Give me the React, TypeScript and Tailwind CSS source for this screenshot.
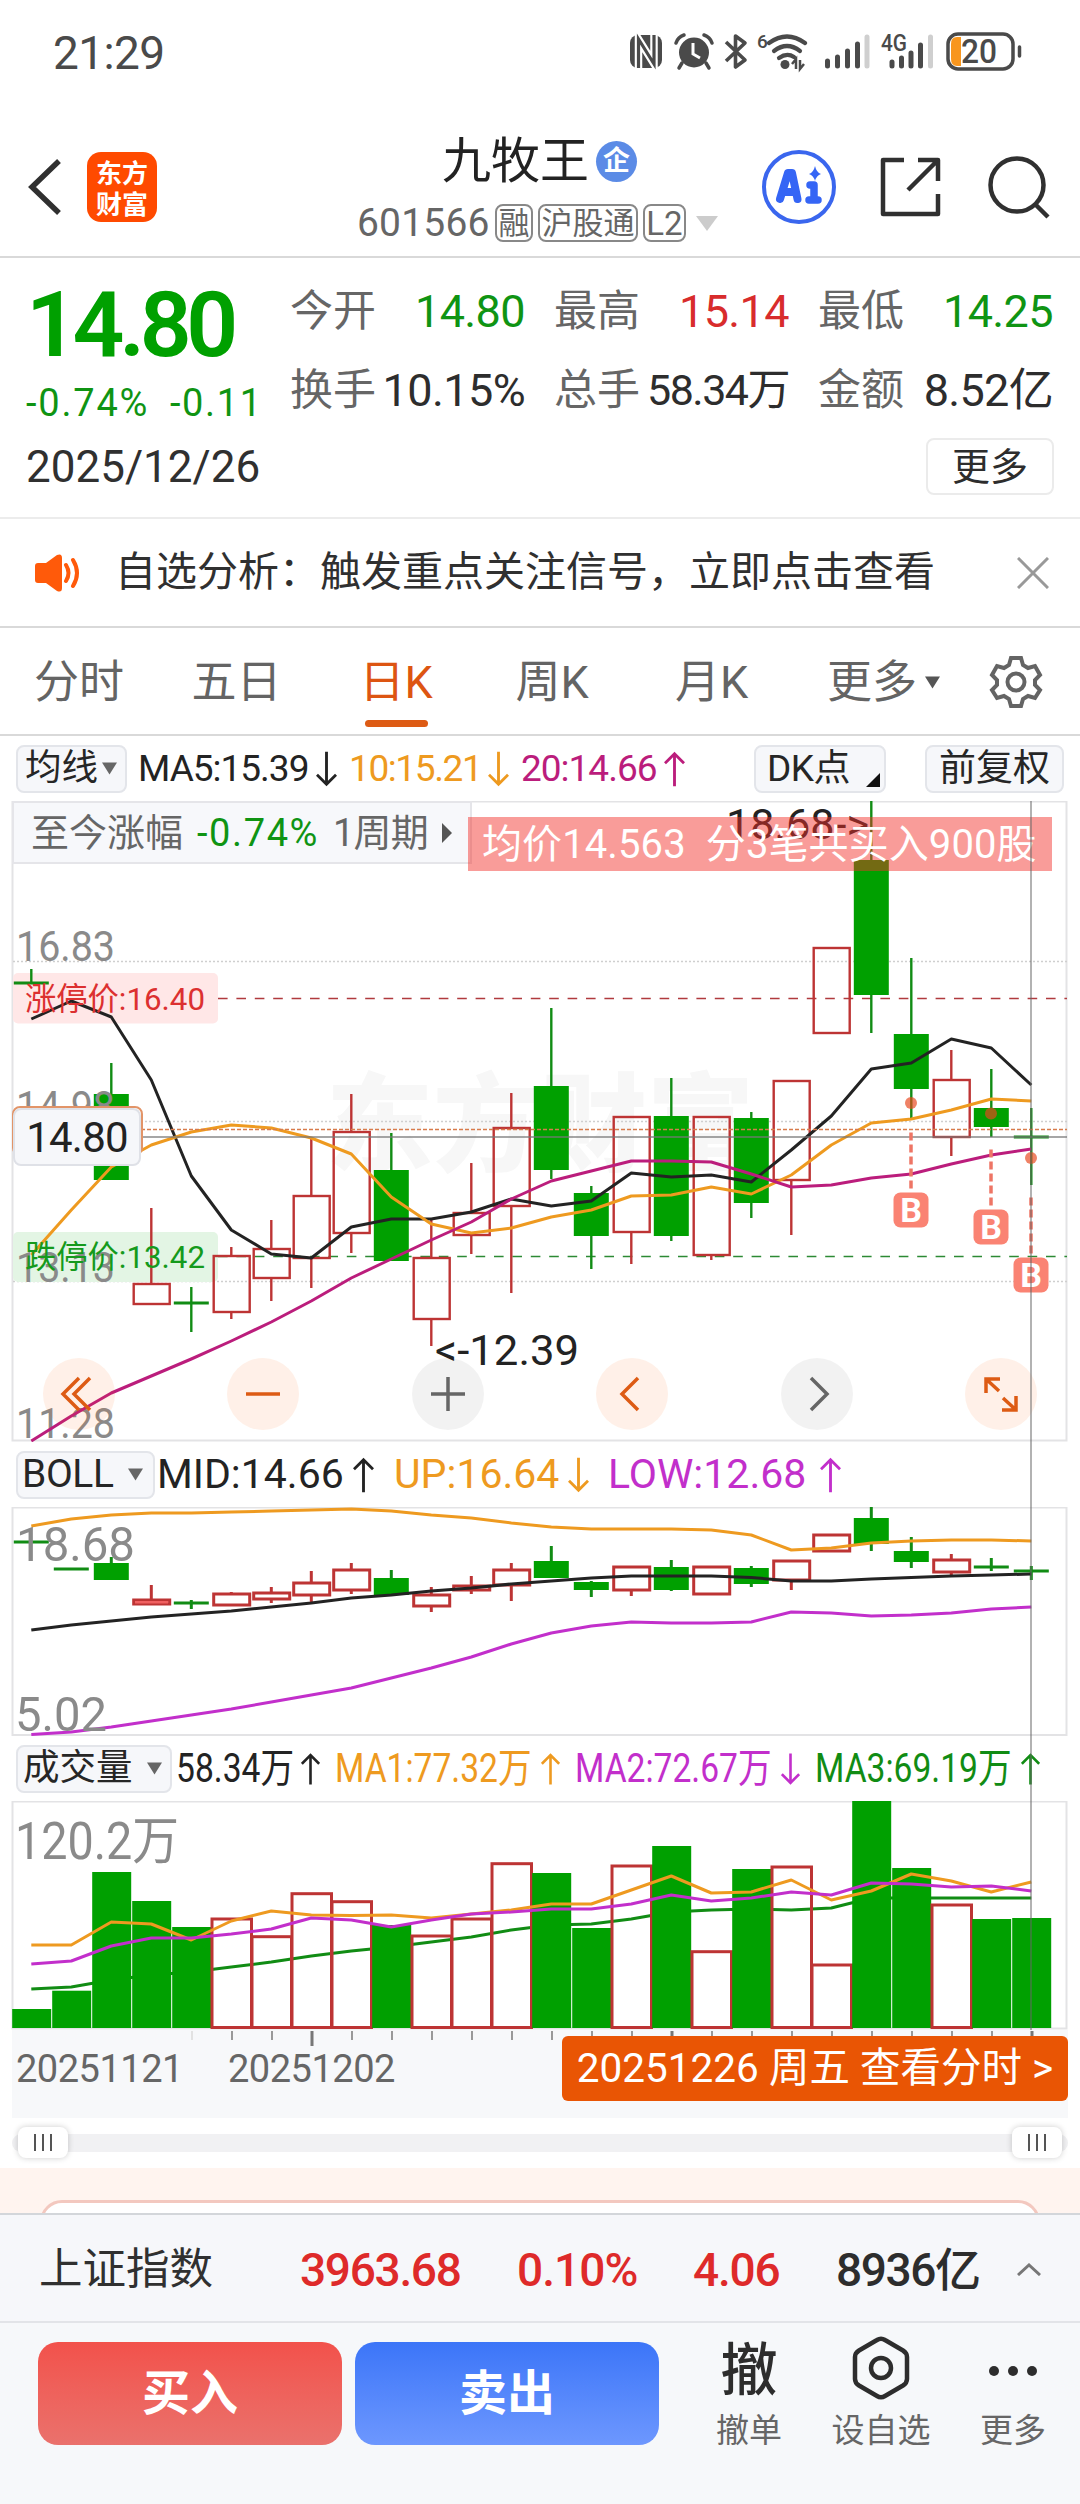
import React from "react";

type Kind = "r" | "g";
// kind, high, body top, body bottom, low
type Candle = [Kind, number, number, number, number];

const GREEN = "#00a000";
const GREEN_LINE = "#118c14";
const RED = "#bd3434";
const ORANGE = "#ee9a20";
const PURPLE = "#c22fcb";
const MAGENTA = "#bb1d7c";
const INK = "#232323";

const cx = (i: number) => 31.3 + i * 40;

const dayCandles: Candle[] = [
  ["g", 969, 982, 984, 984],
  ["g", 1125, 1124, 1126, 1125],
  ["g", 1063, 1094, 1180, 1180],
  ["r", 1208, 1284, 1304, 1304],
  ["g", 1287, 1302, 1304, 1332],
  ["r", 1247, 1256, 1312, 1319],
  ["r", 1220, 1249, 1278, 1301],
  ["r", 1139, 1196, 1258, 1288],
  ["r", 1094, 1132, 1233, 1253],
  ["g", 1133, 1170, 1261, 1261],
  ["r", 1220, 1258, 1319, 1346],
  ["r", 1163, 1213, 1235, 1254],
  ["r", 1093, 1128, 1206, 1293],
  ["g", 1008, 1086, 1170, 1179],
  ["g", 1186, 1193, 1236, 1269],
  ["r", 1117, 1117, 1232, 1264],
  ["g", 1078, 1116, 1236, 1241],
  ["r", 1117, 1117, 1255, 1260],
  ["g", 1112, 1118, 1203, 1218],
  ["r", 1081, 1081, 1180, 1235],
  ["r", 948, 948, 1033, 1033],
  ["g", 801, 860, 995, 1033],
  ["g", 958, 1034, 1089, 1118],
  ["r", 1050, 1080, 1137, 1156],
  ["g", 1069, 1108, 1127, 1137],
  ["g", 1108, 1136, 1138, 1185],
];

const bollCandles: Candle[] = [
  ["g", 1542, 1541, 1543, 1542],
  ["g", 1569, 1568, 1570, 1569],
  ["g", 1557, 1563, 1580, 1580],
  ["r", 1585, 1600, 1604, 1604],
  ["g", 1600, 1602, 1604, 1609],
  ["r", 1592, 1594, 1605, 1605],
  ["r", 1587, 1593, 1599, 1603],
  ["r", 1571, 1583, 1595, 1602],
  ["r", 1563, 1570, 1590, 1594],
  ["g", 1570, 1578, 1595, 1595],
  ["r", 1587, 1595, 1606, 1612],
  ["r", 1576, 1586, 1590, 1594],
  ["r", 1563, 1570, 1585, 1601],
  ["g", 1546, 1561, 1578, 1578],
  ["g", 1581, 1582, 1590, 1597],
  ["r", 1567, 1567, 1590, 1596],
  ["g", 1560, 1567, 1590, 1591],
  ["r", 1567, 1567, 1594, 1594],
  ["g", 1566, 1568, 1584, 1587],
  ["r", 1561, 1561, 1580, 1590],
  ["r", 1535, 1535, 1551, 1551],
  ["g", 1507, 1518, 1544, 1551],
  ["g", 1537, 1551, 1562, 1568],
  ["r", 1554, 1560, 1572, 1575],
  ["g", 1558, 1566, 1568, 1571],
  ["g", 1566, 1570, 1572, 1580],
];

const volumes: [Kind, number][] = [
  ["g", 2009], ["g", 1990.7], ["g", 1872], ["g", 1901], ["g", 1927], ["r", 1919], ["r", 1936.7],
  ["r", 1893.7], ["r", 1901.7], ["g", 1925], ["r", 1936], ["r", 1919], ["r", 1863.7], ["g", 1873],
  ["g", 1928], ["r", 1866], ["g", 1846], ["r", 1951.7], ["g", 1869], ["r", 1867], ["r", 1965],
  ["g", 1801], ["g", 1868], ["r", 1905], ["g", 1919], ["g", 1918],
];

const ma5 = [1019, 1001, 1017, 1080, 1176, 1230, 1254, 1258, 1227, 1219, 1219, 1212, 1199, 1206, 1201, 1173, 1177, 1175, 1182, 1150, 1116, 1069, 1063, 1039, 1048, 1085];
const ma10 = [1255, 1210, 1167, 1145, 1132, 1125, 1128, 1138, 1154, 1197, 1224, 1233, 1228, 1217, 1210, 1196, 1195, 1187, 1194, 1175, 1145, 1123, 1119, 1110, 1099, 1101];
const ma20 = [1441, 1416, 1393, 1376, 1359, 1341, 1322, 1301, 1278, 1259, 1240, 1222, 1199, 1181, 1171, 1161, 1161, 1162, 1174, 1187, 1185, 1178, 1174, 1164, 1155, 1149];
const bollUp = [1526, 1519, 1515, 1513, 1513, 1512, 1511, 1510, 1509, 1511, 1515, 1518, 1523, 1527, 1529, 1529, 1529, 1530, 1535, 1550, 1548, 1543, 1541, 1540, 1540, 1541];
const bollMid = [1630, 1625, 1621, 1617, 1614, 1611, 1607, 1603, 1598, 1595, 1591, 1588, 1584, 1581, 1578, 1576, 1576, 1576, 1577.5, 1581, 1581, 1579, 1577.5, 1576, 1575, 1574];
const bollLow = [1734.5, 1732, 1727, 1721, 1715, 1709, 1702, 1695, 1688, 1678, 1668, 1657, 1644, 1633, 1626, 1622, 1623, 1623, 1622, 1612, 1613, 1616, 1615, 1613, 1609, 1607];
const vol1 = [1945, 1945, 1922, 1924, 1940, 1921, 1911, 1915, 1915.5, 1915, 1918, 1914, 1910, 1904, 1904, 1890, 1876, 1893, 1892, 1880, 1900, 1891, 1874, 1881, 1892, 1882];
const vol2 = [1964, 1961, 1946, 1938, 1938, 1934, 1929, 1918, 1920, 1927, 1920, 1914, 1912, 1909, 1909, 1904, 1895, 1901, 1898, 1892, 1895, 1883, 1884, 1887, 1886, 1891];
const vol3 = [1989, 1987, 1980, 1975, 1972, 1967, 1962, 1956, 1951, 1947, 1942, 1937, 1930, 1925, 1924, 1919, 1912, 1910, 1909, 1910, 1908, 1898, 1898, 1898, 1898, 1898];

function Line({ ys, color }: { ys: number[]; color: string }) {
  return <polyline points={ys.map((y, i) => `${cx(i)},${y}`).join(" ")} fill="none" stroke={color} strokeWidth="3" strokeLinejoin="round" />;
}

function Candles({ data, stroke }: { data: Candle[]; stroke: number }) {
  return (
    <>
      {data.map(([k, hi, top, bot, lo], i) => {
        const x = cx(i);
        if (k === "g")
          return (
            <g key={i}>
              <line x1={x} x2={x} y1={hi} y2={lo} stroke={GREEN_LINE} strokeWidth={stroke} />
              <rect x={x - 17.5} y={bot - top < 3 ? top - 0.5 : top} width="35" height={bot - top < 3 ? 3 : bot - top} fill={bot - top < 3 ? GREEN_LINE : GREEN} />
            </g>
          );
        return (
          <g key={i} stroke={RED} strokeWidth={stroke}>
            <line x1={x} x2={x} y1={hi} y2={top} />
            <line x1={x} x2={x} y1={bot} y2={lo} />
            <rect x={x - 17.6} y={top} width="36" height={bot - top} fill="none" />
          </g>
        );
      })}
    </>
  );
}

function Label({ x, y, size, w, fill = "#8a8a8a", children }: { x: number; y: number; size: number; w: number; fill?: string; children: string }) {
  return (
    <text x={x} y={y} fontSize={size} fill={fill} textLength={w} lengthAdjust="spacingAndGlyphs">
      {children}
    </text>
  );
}

function Arrow({ down, className }: { down?: boolean; className: string }) {
  return (
    <svg viewBox="0 0 22 36" className={`h-9 shrink-0 ${className}`} fill="none" stroke="currentColor" strokeWidth="3">
      {down ? <path d="M11 0V34M1 24L11 34L21 24" /> : <path d="M11 36V2M1 12L11 2L21 12" />}
    </svg>
  );
}

function Tri({ className }: { className: string }) {
  return (
    <svg viewBox="0 0 16 13" className={`h-[13px] w-[15px] shrink-0 ${className}`} fill="currentColor">
      <path d="M0 0H16L8 13Z" />
    </svg>
  );
}

function StatusBar() {
  return (
    <div className="flex h-[105px] items-start justify-between pl-[53px] pr-[54px] text-[#4a4a4a]">
      <span className="mt-[30px] text-[46px] leading-none tracking-[-0.6px]">21:29</span>
      <svg viewBox="626 28 400 46" className="mt-7 h-[46px] w-[400px]" fill="none" stroke="#4a4a4a">
        <rect x="630" y="35" width="32" height="33" rx="8" fill="#4a4a4a" stroke="none" />
        <path d="M638.500 68V39L654 64V35" stroke="#fff" strokeWidth="7.500" />
        <path d="M638.500 68V39L654 64V35" stroke="#4a4a4a" strokeWidth="3.200" />
        <circle cx="694" cy="52.500" r="15" fill="#4a4a4a" stroke="none" />
        <path d="M676 43Q678 37 684 35M704 35Q710 37 712 43M682 63L679 68M706 63L709 68" strokeWidth="3.500" strokeLinecap="round" />
        <path d="M693 43V54L700 58" stroke="#fff" strokeWidth="3" />
        <path d="M726 42L745 60L735.500 67V36L745 43L726 61" strokeWidth="3.600" strokeLinejoin="round" />
        <g strokeWidth="4.200" strokeLinecap="round">
          <path d="M769 43Q787 30 805 43" />
          <path d="M774 51Q787 41 800 51" />
          <path d="M779 58Q787 52.500 794 57" />
        </g>
        <circle cx="785" cy="64.500" r="4.500" fill="#4a4a4a" stroke="none" />
        <path d="M792 64L796 59V69M800 60V69L804 64" strokeWidth="2.500" />
        <g strokeWidth="5" strokeLinecap="round">
          <path d="M827.500 61V66M837.500 57V66M847.500 51V66M857.500 44V66" />
          <path d="M867 37V66" stroke="#cfcfcf" />
          <path d="M892 62V66M901.500 58V66M911 53V66M920.500 45V66" />
          <path d="M930.500 37V66" stroke="#cfcfcf" />
        </g>
        <rect x="948" y="34" width="65" height="35" rx="10" strokeWidth="3.500" />
        <path d="M961 37V66H957Q951 66 951 59V44Q951 37 957 37Z" fill="#f8961e" stroke="none" />
        <path d="M1019.500 47V56" strokeWidth="3.500" strokeLinecap="round" />
        <g fill="#4a4a4a" stroke="none">
          <text x="757" y="48" fontSize="19" fontWeight="500">6</text>
          <text x="881" y="51" fontSize="24" fontWeight="500" textLength="26" lengthAdjust="spacingAndGlyphs">4G</text>
          <text x="961" y="63" fontSize="33" fontWeight="500" textLength="36" lengthAdjust="spacingAndGlyphs">20</text>
        </g>
      </svg>
    </div>
  );
}

function Header() {
  return (
    <header className="relative flex h-[153px] items-start justify-between border-b-2 border-[#d9d9d9] pl-7 pr-[29px]">
      <div className="mt-[47px] flex items-center gap-[25px]">
        <svg viewBox="0 0 34 56" className="h-14 w-[34px]" fill="none" stroke="#303030" strokeWidth="5.500">
          <path d="M31 2L4 28L31 54" />
        </svg>
        <div className="flex h-[70px] w-[70px] flex-col items-center justify-center rounded-[14px] bg-[#ff4a00] font-['Noto_Sans_CJK_SC'] text-[26px] font-bold leading-[31px] text-white">
          <span>东方</span>
          <span>财富</span>
        </div>
      </div>
      <div className="absolute left-[357px] top-[32px] w-[362px]">
        <div className="flex h-12 items-center pl-[85px]">
          <span className="text-[49px] leading-none text-[#222]">九牧王</span>
          <span className="ml-[7px] flex h-[41px] w-[41px] items-center justify-center rounded-full bg-[#5b8be6] text-[27px] font-bold leading-none text-white">企</span>
        </div>
        <div className="mt-[19px] flex h-[38px] items-center text-[#666]">
          <span className="w-[138px] text-[39px] leading-none tracking-[0.2px]">601566</span>
          <span className="flex h-[38px] w-[38px] items-center justify-center rounded-lg border-2 border-[#888] text-[31px] leading-none">融</span>
          <span className="ml-[5px] flex h-[38px] w-[100px] items-center justify-center rounded-lg border-2 border-[#888] text-[31px] leading-none">沪股通</span>
          <span className="ml-[5px] flex h-[38px] w-[43px] items-center justify-center rounded-lg border-2 border-[#888] text-[33px] leading-none">L2</span>
          <svg viewBox="0 0 22 15" className="ml-[10px] h-[15px] w-[22px]" fill="#ccc">
            <path d="M0 0H22L11 15Z" />
          </svg>
        </div>
      </div>
      <div className="mt-11 flex items-center">
        <svg viewBox="0 0 76 76" className="h-[76px] w-[76px]" fill="none">
          <circle cx="38" cy="38" r="35" stroke="#3a66ee" strokeWidth="4" />
          <path d="M19 50L27 24H31L36.500 50M22 43H34" stroke="#3565f5" strokeWidth="8" strokeLinejoin="round" strokeLinecap="round" />
          <path d="M49 36H53V51M48 51H57" stroke="#3565f5" strokeWidth="7.500" strokeLinejoin="round" strokeLinecap="round" />
          <path d="M54 17Q55.500 23.500 60 25Q55.500 26.500 54 32Q52.500 26.500 48 25Q52.500 23.500 54 17Z" fill="#3565f5" />
        </svg>
        <svg viewBox="0 0 62 62" className="ml-[43px] h-[62px] w-[62px]" fill="none" stroke="#303030" strokeWidth="4.500" strokeLinejoin="round">
          <path d="M24 4H3V58H58V38" />
          <path d="M38 4H58V25M57 5L28 34" />
        </svg>
        <svg viewBox="0 0 64 64" className="ml-[45px] h-16 w-16" fill="none" stroke="#303030" strokeWidth="4.500">
          <circle cx="30" cy="30" r="26.500" />
          <path d="M48 49L61 62" />
        </svg>
      </div>
    </header>
  );
}

function Stat({ label, value, tone }: { label: string; value: string; tone: string }) {
  return (
    <div className="flex h-[79px] items-center justify-between whitespace-nowrap leading-none">
      <span className="text-[43px] text-[#666]">{label}</span>
      <span className={tone}>{value}</span>
    </div>
  );
}

function Quote() {
  return (
    <section className="relative h-[261px] border-b-2 border-[#ececec]">
      <div className="flex">
        <div className="w-[290px] whitespace-nowrap pl-[26px] leading-none text-[#0f9413]">
          <div className="mt-[22px] text-[91px] font-semibold tracking-[-5.400px] text-[#00a000]">14.80</div>
          <div className="mt-[13px] flex text-[38px]">
            <span className="w-[144px] tracking-[1.800px]">-0.74%</span>
            <span className="tracking-[1.600px]">-0.11</span>
          </div>
        </div>
        <div className="grid w-[763px] grid-cols-3 gap-x-[29px] pt-[14px]">
          <Stat label="今开" value="14.80" tone="text-[45px] tracking-[-0.6px] text-[#0f9413]" />
          <Stat label="最高" value="15.14" tone="text-[45px] tracking-[-0.6px] text-[#d82c2c]" />
          <Stat label="最低" value="14.25" tone="text-[45px] tracking-[-0.6px] text-[#0f9413]" />
          <Stat label="换手" value="10.15%" tone="text-[45px] tracking-[-0.6px] text-[#2d2d2d]" />
          <Stat label="总手" value="58.34万" tone="text-[43px] tracking-[-1.500px] text-[#2d2d2d]" />
          <Stat label="金额" value="8.52亿" tone="text-[45px] tracking-[-0.700px] text-[#2d2d2d]" />
        </div>
      </div>
      <div className="mt-[8px] flex items-center justify-between pl-[26px] pr-[26px]">
        <span className="text-[44px] leading-none text-[#303030]">2025/12/26</span>
        <span className="flex h-[57px] w-[128px] items-center justify-center rounded-lg border-2 border-[#ebebeb] text-[38px] leading-none text-[#2d2d2d]">更多</span>
      </div>
    </section>
  );
}

function Notice() {
  return (
    <section className="flex h-[109px] items-center border-b-2 border-[#d9d9d9] pl-[35px] pr-[31px]">
      <svg viewBox="0 0 46 38" className="h-[38px] w-[46px]" fill="none" stroke="#ff5a0a">
        <path d="M3 9H11L22 1Q27 -1 27 4V34Q27 39 22 37L11 29H3Q0 29 0 26V12Q0 9 3 9Z" fill="#ff5a0a" stroke="none" />
        <path d="M31 11Q36 19 31 27M38 6Q46 19 38 32" strokeWidth="4" strokeLinecap="round" />
      </svg>
      <span className="ml-[34px] whitespace-nowrap text-[41px] leading-none text-[#303030]">自选分析：触发重点关注信号，立即点击查看</span>
      <svg viewBox="0 0 32 32" className="ml-auto h-8 w-8" fill="none" stroke="#999" strokeWidth="3">
        <path d="M1 1L31 31M31 1L1 31" />
      </svg>
    </section>
  );
}

function Tabs() {
  return (
    <nav className="flex h-[108px] items-center whitespace-nowrap border-b-2 border-[#d9d9d9] pt-0.5 text-[45px] leading-none text-[#646464]">
      <span className="w-[158px] text-center">分时</span>
      <span className="w-[157px] text-center">五日</span>
      <span className="relative w-[162px] text-center text-[#dd5512]">
        日K
        <i className="absolute left-[50px] top-[60px] h-[7px] w-[63px] rounded-full bg-[#dd5b14]" />
      </span>
      <span className="w-[150px] text-center">周K</span>
      <span className="w-[169px] text-center">月K</span>
      <span className="ml-[31px]">更多</span>
      <Tri className="ml-2 text-[#555]" />
      <svg viewBox="0 0 54 54" className="ml-[49px] h-[54px] w-[54px]" fill="none" stroke="#646464" strokeWidth="4" strokeLinejoin="miter">
        <path d="M22 3H32L34 10L39 13L46 11L51 20L46 25V30L51 35L46 43L39 41L34 44L32 51H22L20 44L15 41L8 43L3 35L8 30V25L3 20L8 11L15 13L20 10Z" />
        <circle cx="27" cy="27" r="8.500" />
      </svg>
    </nav>
  );
}

const chip = "flex shrink-0 items-center rounded-lg border-2 border-[#e3e5ea] bg-[#f6f7fa] text-[#262626]";

function MaRow() {
  return (
    <div className="flex h-[65px] items-center whitespace-nowrap pl-[16px] text-[37px] leading-none text-[#232323]">
      <span className={`${chip} h-12 w-[111px] pl-[7px] text-[36.500px]`}>
        均线
        <Tri className="ml-1 text-[#666]" />
      </span>
      <span className="ml-[11px] w-[178px] tracking-[-1px]">MA5:15.39</span>
      <Arrow down className="w-[21px] text-[#232323]" />
      <span className="ml-3 w-[139px] tracking-[-1.400px] text-[#ee9a20]">10:15.21</span>
      <Arrow down className="w-[21px] text-[#ee9a20]" />
      <span className="ml-3 w-[143px] tracking-[-1px] text-[#bb1d7c]">20:14.66</span>
      <Arrow className="w-[21px] text-[#bb1d7c]" />
      <span className={`${chip} relative ml-[69px] h-12 w-[132px] pl-[11px] text-[37px] tracking-[-0.500px]`}>
        DK点
        <svg viewBox="0 0 14 14" className="absolute bottom-1 right-1 h-[14px] w-[14px]" fill="#111">
          <path d="M14 0V14H0Z" />
        </svg>
      </span>
      <span className={`${chip} ml-[39px] h-12 w-[139px] justify-center text-[37px]`}>前复权</span>
    </div>
  );
}

function Badge({ x, y }: { x: number; y: number }) {
  return (
    <g>
      <line x1={x} x2={x} y1={y - 60} y2={y - 4} stroke="#ee7565" strokeWidth="3.500" strokeDasharray="8 4" />
      <rect x={x - 17.5} y={y} width="35" height="35" rx="7" fill="#fa8373" />
      <text x={x} y={y + 29.5} fontSize="34" fontWeight="700" fill="#fff" textAnchor="middle">
        B
      </text>
    </g>
  );
}

const round = "flex h-[72px] w-[72px] items-center justify-center rounded-full";
const warm = "bg-[#ff5a00]/[0.09] text-[#dd5b14]";
const cool = "bg-black/[0.05] text-[#666]";

function ZoomControls() {
  const icon = "h-10 w-10";
  const props = { viewBox: "0 0 40 40", fill: "none", stroke: "currentColor", strokeWidth: 3.5 };
  return (
    <div className="absolute left-[43px] top-[557px] flex w-[994px] justify-between">
      <span className={`${round} ${warm}`}>
        <svg {...props} className={icon}><path d="M20 4L4 20L20 36M31 4L15 20L31 36" /></svg>
      </span>
      <span className={`${round} ${warm}`}>
        <svg {...props} className={icon}><path d="M3 20H37" /></svg>
      </span>
      <span className={`${round} ${cool}`}>
        <svg {...props} className={icon}><path d="M3 20H37M20 3V37" /></svg>
      </span>
      <span className={`${round} ${warm}`}>
        <svg {...props} className={icon}><path d="M26 4L10 20L26 36" /></svg>
      </span>
      <span className={`${round} ${cool}`}>
        <svg {...props} className={icon}><path d="M14 4L30 20L14 36" /></svg>
      </span>
      <span className={`${round} ${warm}`}>
        <svg {...props} className={icon}><path d="M5 19V5H19M5 5L18 17M35 22V36H21M35 36L22 24" /></svg>
      </span>
    </div>
  );
}

function DayChart() {
  return (
    <div className="relative h-[641px]">
      <svg viewBox="0 801 1080 641" className="block h-[641px] w-[1080px]">
        <rect x="12.500" y="801.500" width="1054" height="639" fill="none" stroke="#e3e3e5" strokeWidth="2" />
        <text x="326" y="1163" fontSize="107" fontWeight="900" fill="#f7f7f7" textLength="428">东方财富</text>
        <g stroke="#cfcfcf" strokeWidth="1.500" strokeDasharray="2 2">
          <path d="M13 961.500H1067M13 1121.500H1067M13 1281.500H1067" />
        </g>
        <rect x="13" y="973" width="205" height="50.500" rx="5" fill="#ffe7e7" />
        <rect x="13" y="1232" width="205" height="50" rx="5" fill="#e3f5e4" />
        <line x1="218" x2="1067" y1="998.500" y2="998.500" stroke="#b03a3e" strokeWidth="1.300" strokeDasharray="9.600 8.800" />
        <line x1="218" x2="1067" y1="1256.500" y2="1256.500" stroke="#2c8a34" strokeWidth="1.300" strokeDasharray="9.600 8.800" />
        <Candles data={dayCandles} stroke={2.4} />
        <Label x={16} y={961} size={42} w={99}>16.83</Label>
        <Label x={16} y={1121} size={42} w={99}>14.98</Label>
        <Label x={16} y={1281.5} size={42} w={99}>13.13</Label>
        <Label x={16} y={1438} size={42} w={99}>11.28</Label>
        <Line ys={ma5} color={INK} />
        <Line ys={ma10} color={ORANGE} />
        <Line ys={ma20} color={MAGENTA} />
        <Label x={25} y={1009.5} size={32} w={180} fill="#dc3030">涨停价:16.40</Label>
        <Label x={25} y={1267.5} size={32} w={180} fill="#159a1c">跌停价:13.42</Label>
        <line x1="141" x2="1067" y1="1129.500" y2="1129.500" stroke="#d87b4b" strokeWidth="1.600" strokeDasharray="4 2" />
        <line x1="141" x2="1067" y1="1137" y2="1137" stroke="#777" strokeOpacity="0.650" strokeWidth="2" />
        <Label x={435} y={1365} size={43} w={144} fill={INK}>{"<-12.39"}</Label>
        <Label x={726} y={839} size={43} w={143} fill={INK}>{"18.68->"}</Label>
        <g fill="#e8471d" fillOpacity="0.680">
          <circle cx="911" cy="1103" r="6" />
          <circle cx="991" cy="1113.500" r="6" />
          <circle cx="1031" cy="1158" r="6" />
        </g>
        <Badge x={911} y={1192.5} />
        <Badge x={991} y={1209.5} />
        <Badge x={1031} y={1257.5} />
      </svg>
      <div className="absolute left-3 top-0 flex h-[63px] w-[460px] items-center whitespace-nowrap border-2 border-[#e5e5e9] bg-[#f7f8fb] pl-[17px] text-[38px] leading-none text-[#666]">
        至今涨幅
        <span className="ml-[14px] w-[136px] tracking-[1.600px] text-[#0f9413]">-0.74%</span>
        <span className="tracking-[-0.800px]">1周期</span>
        <svg viewBox="0 0 10 20" className="ml-[14px] h-5 w-[10px]" fill="#555">
          <path d="M0 0L10 10L0 20Z" />
        </svg>
      </div>
      <div className="absolute left-[468px] top-4 flex h-[54px] w-[584px] items-center whitespace-pre bg-[#f22e28]/[0.475] pl-[14px] pt-0.5 text-[40px] leading-none tracking-[0.100px] text-white">
        {"均价14.563  分3笔共买入900股"}
      </div>
      <div className="absolute left-3 top-[305px] h-[50px] w-[131px] rounded-lg border-2 border-[#e29468]" />
      <div className="absolute left-[13px] top-[307px] flex h-[58px] w-[128px] items-center justify-center rounded-lg border-2 border-[#dfe1e7] bg-[#f6f7fa] pt-0.5 text-[42px] leading-none tracking-[-0.800px] text-[#222]">14.80</div>
      <ZoomControls />
    </div>
  );
}

function BollRow() {
  return (
    <div className="flex h-[65px] items-center whitespace-nowrap pl-4 text-[41px] leading-none text-[#232323]">
      <span className={`${chip} h-12 w-[139px] pl-[4px] text-[39px] tracking-[-0.400px]`}>
        BOLL
        <Tri className="ml-[14px] text-[#666]" />
      </span>
      <span className="ml-[2px] w-[196px]">MID:14.66</span>
      <Arrow className="w-[21px] text-[#232323]" />
      <span className="ml-5 w-[174px] text-[#ee9a20]">UP:16.64</span>
      <Arrow down className="w-[21px] text-[#ee9a20]" />
      <span className="ml-[19px] w-[212px] text-[#c22fcb]">LOW:12.68</span>
      <Arrow className="w-[21px] text-[#c22fcb]" />
    </div>
  );
}

function BollChart() {
  return (
    <svg viewBox="0 1507 1080 229" className="block h-[229px] w-[1080px]">
      <rect x="12.500" y="1507.500" width="1054" height="227.500" fill="none" stroke="#e3e3e5" strokeWidth="2" />
      <Candles data={bollCandles} stroke={3} />
      <rect x="135" y="1601" width="33" height="2.500" fill="#f06060" />
      <Line ys={bollMid} color={INK} />
      <Line ys={bollUp} color={ORANGE} />
      <Line ys={bollLow} color={PURPLE} />
      <Label x={16} y={1560.5} size={49} w={119}>18.68</Label>
      <Label x={15} y={1730.5} size={49} w={92}>5.02</Label>
    </svg>
  );
}

function VolLegend({ text, width, color, down }: { text: string; width: string; color: string; down?: boolean }) {
  return (
    <span className={`flex items-center ${color}`}>
      <span className={width}>
        <span className="inline-block origin-left scale-x-[0.84]">{text}</span>
      </span>
      <Arrow down={down} className="w-[19px]" />
    </span>
  );
}

function VolumeRow() {
  return (
    <div className="flex h-[65px] items-center whitespace-nowrap pl-4 text-[40px] leading-none">
      <span className={`${chip} mr-[4px] h-12 w-[156px] pl-[5px] text-[36.500px]`}>
        成交量
        <Tri className="ml-[14px] text-[#666]" />
      </span>
      <VolLegend text="58.34万" width="w-[125px]" color="text-[#232323]" />
      <span className="w-[15px]" />
      <VolLegend text="MA1:77.32万" width="w-[206px]" color="text-[#ee9a20]" />
      <span className="w-[15px]" />
      <VolLegend text="MA2:72.67万" width="w-[206px]" color="text-[#c22fcb]" down />
      <span className="w-[15px]" />
      <VolLegend text="MA3:69.19万" width="w-[206px]" color="text-[#118c14]" />
    </div>
  );
}

function VolumeChart() {
  return (
    <svg viewBox="0 1801 1080 229" className="block h-[229px] w-[1080px]">
      <rect x="12.500" y="1801.500" width="1054" height="227" fill="none" stroke="#e3e3e5" strokeWidth="2" />
      <Line ys={vol3} color={GREEN_LINE} />
      {volumes.map(([k, top], i) =>
        k === "g" ? (
          <rect key={i} x={12.2 + i * 40} y={top} width="39" height={2028 - top} fill={GREEN} />
        ) : (
          <rect key={i} x={12 + i * 40} y={top} width="39.500" height={2027.5 - top} fill="none" stroke={RED} strokeWidth="3" />
        )
      )}
      <Line ys={vol1} color={ORANGE} />
      <Line ys={vol2} color={PURPLE} />
      <Label x={15} y={1859} size={51} w={164}>120.2万</Label>
    </svg>
  );
}

function DateAxis() {
  return (
    <div className="relative ml-3 h-[88px] w-[1056px] bg-[#f7f8fa]">
      <svg viewBox="12 2030 1056 20" className="block h-5 w-[1056px]">
        {Array.from({ length: 22 }, (_, n) => {
          const i = n + 4;
          const major = i === 7 || i === 16 || i === 25;
          return <line key={i} x1={cx(i) + 0.7} x2={cx(i) + 0.7} y1="2031" y2={major ? 2046 : 2040} stroke={i === 4 ? "#e2e2e2" : major ? "#777" : "#999"} strokeWidth={major ? 3 : 2} />;
        })}
      </svg>
      <div className="flex text-[38px] leading-none tracking-[-0.500px] text-[#666]">
        <span className="ml-1 w-[212px]">20251121</span>
        <span>20251202</span>
      </div>
      <div className="absolute left-[550px] top-[6px] flex h-[65px] w-[506px] items-center justify-center whitespace-pre rounded-md bg-[#e95504] text-[40.500px] leading-none text-white">
        20251226 周五 查看分时 &gt;
      </div>
    </div>
  );
}

function Handle({ className }: { className: string }) {
  return (
    <span className={`absolute top-[9px] flex h-[31px] w-[50px] items-center justify-center gap-[6px] rounded-lg bg-white shadow-[0_0_6px_rgba(0,0,0,0.2)] ${className}`}>
      <i className="h-[17px] w-[2px] bg-[#555]" />
      <i className="h-[17px] w-[2px] bg-[#555]" />
      <i className="h-[17px] w-[2px] bg-[#555]" />
    </span>
  );
}

function RangeSlider() {
  return (
    <div className="relative h-[50px] px-3 pt-4">
      <div className="h-[18px] rounded-full bg-[#f1f1f3]" />
      <Handle className="left-[18px]" />
      <Handle className="right-[18px]" />
    </div>
  );
}

function IndexBar() {
  return (
    <section className="relative flex h-[110px] items-center whitespace-nowrap border-b-2 border-t-2 border-b-[#e2e4e8] border-t-[#d3d6da] bg-[#f6f7fa] pl-[39px] pt-[3px] text-[46px] font-medium leading-none text-[#de2a2a]">
      <span className="w-[261px] text-[43.500px] font-normal text-[#303030]">上证指数</span>
      <span className="w-[217px] tracking-[-1.300px]">3963.68</span>
      <span className="w-[176px] tracking-[-0.900px]">0.10%</span>
      <span className="w-[143px] tracking-[-1.200px]">4.06</span>
      <span className="w-[181px] tracking-[-1.400px] text-[#2d2d2d]">8936亿</span>
      <svg viewBox="0 0 24 13" className="h-[13px] w-6" fill="none" stroke="#777" strokeWidth="3">
        <path d="M1 12L12 2L23 12" />
      </svg>
    </section>
  );
}

function ActionBar() {
  return (
    <footer className="flex h-[181px] items-start bg-[#f6f8fa] pl-[38px] pt-[19px]">
      <button className="flex h-[103px] w-[304px] items-center justify-center rounded-[20px] bg-gradient-to-b from-[#f2514b] to-[#ea716c] text-[48px] font-bold leading-none text-white">买入</button>
      <button className="ml-[13px] flex h-[103px] w-[304px] items-center justify-center rounded-[20px] bg-gradient-to-b from-[#3b75f8] to-[#6d97fe] text-[48px] font-bold leading-none text-white">卖出</button>
      <div className="ml-[49px] flex w-[82px] flex-col items-center text-[33px] leading-none text-[#666]">
        <span className="flex h-[69px] items-center pb-3 text-[57px] font-medium leading-none text-[#2d2d2d]">撤</span>
        <span className="mt-[3px]">撤单</span>
      </div>
      <div className="ml-[41px] flex w-[100px] flex-col items-center text-[33px] leading-none text-[#666]">
        <svg viewBox="0 0 58 64" className="-mt-[6px] h-[64px] w-[58px]" fill="none" stroke="#2d2d2d" strokeWidth="4.500" strokeLinejoin="round">
          <path d="M25 4Q29 1.500 33 4L51 14.500Q55 17 55 21V43Q55 47 51 49.500L33 60Q29 62.500 25 60L7 49.500Q3 47 3 43V21Q3 17 7 14.500Z" />
          <circle cx="29" cy="32" r="10" />
        </svg>
        <span className="mt-[14px] whitespace-nowrap">设自选</span>
      </div>
      <div className="ml-[48px] flex w-[68px] flex-col items-center text-[33px] leading-none text-[#666]">
        <svg viewBox="0 0 50 69" className="h-[69px] w-[50px]" fill="#2d2d2d">
          <circle cx="6" cy="29" r="5" />
          <circle cx="25" cy="29" r="5" />
          <circle cx="44" cy="29" r="5" />
        </svg>
        <span className="mt-[3px]">更多</span>
      </div>
    </footer>
  );
}

export default function App() {
  return (
    <main className="h-[2504px] w-[1080px] overflow-hidden bg-white font-['Roboto','Noto_Sans_CJK_SC',sans-serif]">
      <StatusBar />
      <Header />
      <Quote />
      <Notice />
      <Tabs />
      <section className="relative">
        <MaRow />
        <DayChart />
        <BollRow />
        <BollChart />
        <VolumeRow />
        <VolumeChart />
        <div className="absolute left-[1030px] top-[65px] h-[1232px] w-[2px] bg-[#666]/50" />
        <DateAxis />
      </section>
      <RangeSlider />
      <section className="h-[45px] overflow-hidden bg-[#fff4ef] px-[40px] pt-8">
        <div className="h-20 rounded-[22px] border-[3px] border-[#f3c8bf] bg-white" />
      </section>
      <IndexBar />
      <ActionBar />
    </main>
  );
}
